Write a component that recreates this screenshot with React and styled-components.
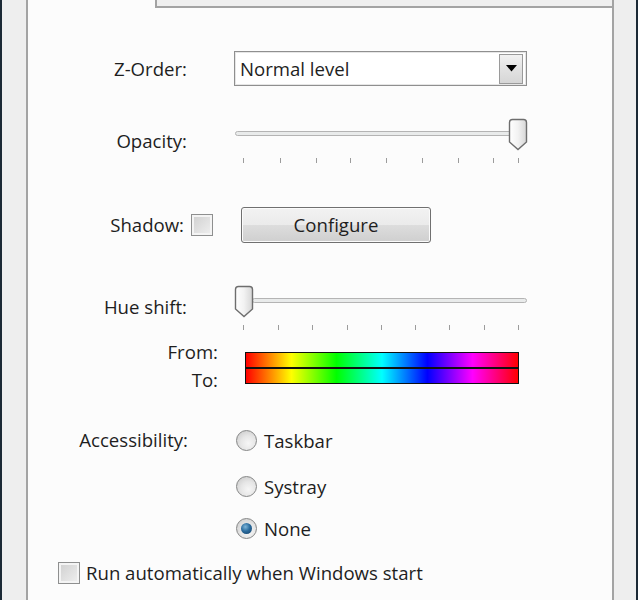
import React from "react";
import styled, { createGlobalStyle } from "styled-components";

const Global = createGlobalStyle`
  html, body { margin: 0; padding: 0; background: #f0f0f0; overflow: hidden; }
  body { font-family: "Open Sans", "Noto Sans", "DejaVu Sans", sans-serif; }
`;

const Window = styled.div`
  width: 638px;
  height: 600px;
  display: flex;
  background: #efefef;
  color: #1e1e1e;
  font-size: 18.6px;
`;

const Frame = styled.div`
  width: 2px;
  background: #1b2935;
  flex: none;
`;

const Gutter = styled.div`
  width: ${(p) => p.$w}px;
  flex: none;
  background: #eeeeee;
`;

const TabControl = styled.div`
  width: 588px;
  flex: none;
  display: flex;
  flex-direction: column;
`;

const TabStrip = styled.div`
  height: 8px;
  display: flex;
  flex: none;
`;

const ActiveTab = styled.div`
  width: 127px;
  background: #fcfcfc;
  border-left: 2px solid #a3a3a3;
  border-right: 2px solid #a3a3a3;
`;

const TabRest = styled.div`
  flex: 1;
  border-bottom: 2px solid #a3a3a3;
  border-right: 2px solid #a3a3a3;
  background: #efefef;
`;

const Panel = styled.div`
  flex: 1;
  background: #fcfcfc;
  border-left: 2px solid #a3a3a3;
  border-right: 2px solid #a3a3a3;
  display: flex;
  flex-direction: column;
`;

const Row = styled.div`
  display: flex;
  align-items: ${(p) => p.$align || "center"};
  margin-top: ${(p) => p.$top}px;
`;

const Label = styled.div`
  width: ${(p) => p.$w || 159}px;
  flex: none;
  text-align: right;
  line-height: ${(p) => p.$lh || 24}px;
  white-space: nowrap;
  margin-top: ${(p) => p.$mt || 0}px;
`;

const Control = styled.div`
  margin-left: ${(p) => p.$ml}px;
  margin-top: ${(p) => p.$mt || 0}px;
  flex: none;
`;

const Combo = styled.div`
  width: 293px;
  height: 35px;
  box-sizing: border-box;
  border: 1px solid #8f8f8f;
  box-shadow: inset 0 0 0 1px #e6e6e6;
  background: #ffffff;
  display: flex;
  align-items: center;
  padding: 0 3px 0 5px;
`;

const ComboText = styled.span`
  flex: 1;
  line-height: 24px;
`;

const DropButton = styled.div`
  width: 24px;
  height: 30px;
  box-sizing: border-box;
  border: 1px solid #9a9a9a;
  background: linear-gradient(#f2f2f2, #e2e2e2 50%, #d6d6d6);
  display: flex;
  align-items: center;
  justify-content: center;
`;

const SliderBox = styled.div`
  width: 293px;
  display: flex;
  flex-direction: column;
`;

const TrackArea = styled.div`
  position: relative;
  height: 32px;
`;

const Track = styled.div`
  margin: 13px 0 0 ${(p) => p.$l}px;
  width: ${(p) => p.$w}px;
  height: 5px;
  box-sizing: border-box;
  border: 1px solid #b4b4b4;
  border-radius: 3px;
  background: #e9ebeb;
`;

const Thumb = styled.svg`
  position: absolute;
  top: 0;
  left: ${(p) => p.$x}px;
`;

const Ticks = styled.div`
  position: relative;
  height: 5px;
  margin-top: 8px;
`;

const Tick = styled.span`
  position: absolute;
  top: 0;
  width: 1px;
  height: 5px;
  background: #9c9c9c;
`;

const Check = styled.div`
  width: 22px;
  height: 22px;
  box-sizing: border-box;
  border: 1px solid #8e8f8f;
  box-shadow: inset 0 0 0 2px #f4f4f4;
  background: linear-gradient(135deg, #cfcfcf, #f0f0f0);
  flex: none;
  margin-left: ${(p) => p.$ml || 0}px;
`;

const Button = styled.div`
  width: 190px;
  height: 36px;
  box-sizing: border-box;
  border: 1px solid #707070;
  border-radius: 3px;
  box-shadow: inset 0 0 0 1px #fbfbfb;
  background: linear-gradient(#f2f2f2 0%, #ebebeb 49%, #dddddd 50%, #cfcfcf 100%);
  display: flex;
  align-items: center;
  justify-content: center;
  line-height: 24px;
`;

const LabelStack = styled.div`
  display: flex;
  flex-direction: column;
  width: 190px;
  flex: none;
  text-align: right;
`;

const Spectrum = styled.div`
  width: 274px;
  box-sizing: border-box;
  display: flex;
  flex-direction: column;
  border: 1px solid #101010;
`;

const HueBar = styled.div`
  height: 14px;
  background: linear-gradient(90deg, #ff0000 0%, #ffff00 16.7%, #00ff00 33.3%, #00ffff 50%, #0000ff 66.7%, #ff00ff 83.3%, #ff0000 100%);
  border-top: ${(p) => (p.$split ? "2px solid #101010" : "none")};
`;

const RadioList = styled.div`
  display: flex;
  flex-direction: column;
  gap: ${(p) => p.$gap}px;
`;

const RadioItem = styled.div`
  display: flex;
  align-items: center;
  height: 24px;
  margin-top: ${(p) => p.$mt || 0}px;
`;

const RadioCircle = styled.div`
  width: 21px;
  height: 21px;
  box-sizing: border-box;
  border-radius: 50%;
  border: 1px solid #858686;
  background: radial-gradient(circle at 60% 65%, #f6f6f6 0%, #e6e6e6 45%, #c4c4c4 100%);
  display: flex;
  align-items: center;
  justify-content: center;
  margin-right: 7px;
`;

const RadioDot = styled.div`
  width: 11px;
  height: 11px;
  border-radius: 50%;
  background: radial-gradient(circle at 40% 35%, #7fb6d9 0%, #2b6c9e 45%, #123d63 100%);
`;

const AutoRow = styled.div`
  display: flex;
  align-items: center;
  margin: ${(p) => p.$top}px 0 0 30px;
  gap: 6px;
  line-height: 24px;
`;

function Slider({ value, ticks }) {
  return (
    <SliderBox>
      <TrackArea>
        <Track $l={value > 100 ? 1 : 18} $w={value > 100 ? 292 : 275} />
        <Thumb $x={value} width="20" height="33" viewBox="0 0 20 33">
          <defs>
            <linearGradient id={`tg${value}`} x1="0" y1="0" x2="1" y2="0">
              <stop offset="0" stopColor="#ffffff" />
              <stop offset="0.5" stopColor="#f2f2f2" />
              <stop offset="1" stopColor="#d6d6d6" />
            </linearGradient>
          </defs>
          <path
            d="M1.5 4.5 Q1.5 1.5 4.5 1.5 H15.5 Q18.5 1.5 18.5 4.5 V24 L10 31.5 L1.5 24 Z"
            fill={`url(#tg${value})`}
            stroke="#6e6e6e"
            strokeWidth="1.4"
          />
        </Thumb>
      </TrackArea>
      <Ticks>
        {ticks.map((t) => (
          <Tick key={t} style={{ left: t }} />
        ))}
      </Ticks>
    </SliderBox>
  );
}

function Radio({ checked, label, mt }) {
  return (
    <RadioItem $mt={mt}>
      <RadioCircle>{checked && <RadioDot />}</RadioCircle>
      <span>{label}</span>
    </RadioItem>
  );
}

export default function App() {
  return (
    <>
      <Global />
      <Window>
        <Frame />
        <Gutter $w={24} />
        <TabControl>
          <TabStrip>
            <ActiveTab />
            <TabRest />
          </TabStrip>
          <Panel>
            <Row $top={43}>
              <Label $lh={35}>Z-Order:</Label>
              <Control $ml={47}>
                <Combo>
                  <ComboText>Normal level</ComboText>
                  <DropButton>
                    <svg width="11" height="7" viewBox="0 0 11 7">
                      <path d="M0 0 H11 L5.5 6.5 Z" fill="#000" />
                    </svg>
                  </DropButton>
                </Combo>
              </Control>
            </Row>

            <Row $top={32} $align="flex-start">
              <Label $mt={11}>Opacity:</Label>
              <Control $ml={47}>
                <Slider value={274} ticks={[9, 46, 82, 116, 152, 188, 224, 259, 284]} />
              </Control>
            </Row>

            <Row $top={44}>
              <Label $w={156}>Shadow:</Label>
              <Check $ml={7} />
              <Control $ml={28}>
                <Button>Configure</Button>
              </Control>
            </Row>

            <Row $top={42} $align="flex-start">
              <Label $mt={10}>Hue shift:</Label>
              <Control $ml={47}>
                <Slider value={0} ticks={[9, 44, 78, 113, 147, 181, 215, 250, 284]} />
              </Control>
            </Row>

            <Row $top={8} $align="flex-start">
              <LabelStack>
                <Label as="span" $w={190} $lh={28}>From:</Label>
                <Label as="span" $w={190} $lh={28}>To:</Label>
              </LabelStack>
              <Control $ml={27} $mt={14}>
                <Spectrum>
                  <HueBar />
                  <HueBar $split />
                </Spectrum>
              </Control>
            </Row>

            <Row $top={34} $align="flex-start">
              <Label $w={160}>Accessibility:</Label>
              <Control $ml={48}>
                <RadioList $gap={22}>
                  <Radio label="Taskbar" />
                  <Radio label="Systray" />
                  <Radio label="None" checked mt={-4} />
                </RadioList>
              </Control>
            </Row>

            <AutoRow $top={21}>
              <Check />
              <span>Run automatically when Windows start</span>
            </AutoRow>
          </Panel>
        </TabControl>
        <Gutter $w={22} />
        <Frame />
      </Window>
    </>
  );
}
